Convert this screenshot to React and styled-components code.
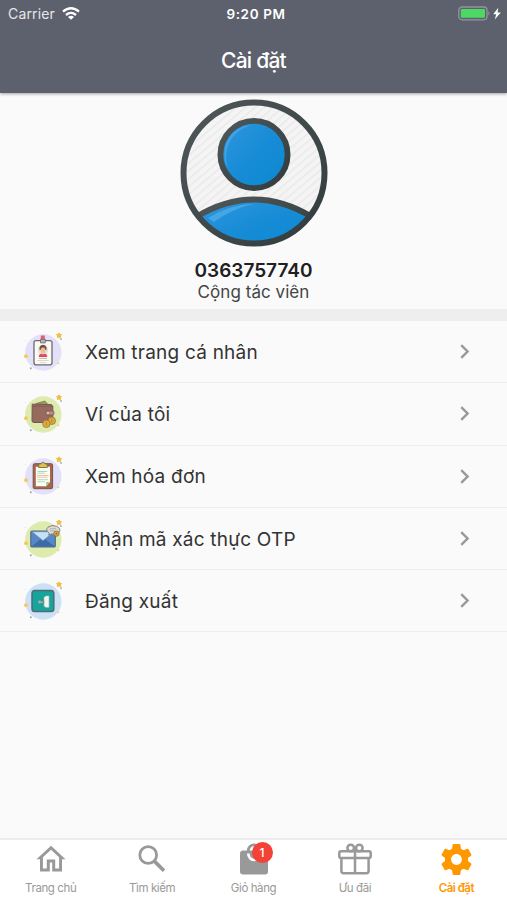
import React from "react";
import styled, { createGlobalStyle } from "styled-components";
import { MdChevronRight } from "react-icons/md";

const Avatar = () => (
  <svg width="148" height="148" viewBox="0 0 148 148">
    <defs>
      <linearGradient id="ring" x1="0" y1="0" x2="1" y2="1">
        <stop offset="0" stopColor="#505859" />
        <stop offset="1" stopColor="#313b3d" />
      </linearGradient>
      <linearGradient id="blue" x1="0" y1="0" x2="1" y2="1">
        <stop offset="0" stopColor="#2f98df" />
        <stop offset="0.5" stopColor="#188cd6" />
        <stop offset="1" stopColor="#0b88d2" />
      </linearGradient>
      <pattern
        id="stripes"
        width="6"
        height="6"
        patternUnits="userSpaceOnUse"
        patternTransform="rotate(50)"
      >
        <rect width="6" height="6" fill="#f4f4f4" />
        <rect width="1.3" height="6" fill="#e8e8e8" />
      </pattern>
      <clipPath id="inside">
        <circle cx="74" cy="74" r="70" />
      </clipPath>
    </defs>
    <circle cx="74" cy="74" r="70" fill="url(#stripes)" />
    <g clipPath="url(#inside)">
      <path
        d="M16 118Q74 83 132 118V150H16Z"
        fill="url(#blue)"
        stroke="url(#ring)"
        strokeWidth="5.8"
      />
      <path d="M28 119Q48 106 75 104.5Q51 110 34 123Z" fill="#46a5e4" />
    </g>
    <circle
      cx="74"
      cy="55.5"
      r="33.6"
      fill="url(#blue)"
      stroke="url(#ring)"
      strokeWidth="5.8"
    />
    <path
      d="M48 70C38 50 50 27 72 26C52 31 42 49 48 70Z"
      fill="#42a2e3"
    />
    <circle
      cx="74"
      cy="74"
      r="70.5"
      fill="none"
      stroke="url(#ring)"
      strokeWidth="6"
    />
  </svg>
);

// round backdrop with the small stars that every menu icon shares
const MenuArt = ({ bg, children }) => (
  <svg width="40" height="40" viewBox="0 0 40 40">
    <circle cx="20.3" cy="20.5" r="18.2" fill={bg} />
    <path
      d="M36 .9l.8 1.4 1.7.3-1.1 1.3.2 1.6-1.6-.6-1.6.6.2-1.6-1.1-1.3 1.7-.3z"
      fill="#f5c13d"
      stroke="#f1bd42"
      strokeWidth="1"
      strokeLinejoin="round"
    />
    <circle cx="3" cy="24.2" r="1.9" fill="#f5c857" />
    <circle cx="35.4" cy="31.2" r="1" fill="#eed070" />
    <circle cx="38" cy="7" r=".9" fill="#9fafa0" />
    <circle cx="7.8" cy="36.2" r="1" fill="#98a49e" />
    <circle cx="2.2" cy="8.5" r=".6" fill="#dfdff0" />
    {children}
  </svg>
);

const BadgeArt = () => (
  <MenuArt bg="#e3e0fa">
    <rect
      x="11"
      y="8.6"
      width="18"
      height="24.2"
      rx="2"
      fill="#fcfbf2"
      stroke="#6d6970"
      strokeWidth="1.3"
    />
    <path d="M17.8 3.5h4v5h-4z" fill="#e75b71" />
    <path d="M17.5 7.3h4.8v3.6h-4.8z" fill="#b6b7b8" stroke="#68656a" strokeWidth=".8" />
    <circle cx="20" cy="18" r="5.2" fill="#e4e1db" />
    <path d="M16.6 18q-.8-5 3.4-5.2 4.2.2 3.4 5.2z" fill="#765048" />
    <ellipse cx="20" cy="18.4" rx="2.4" ry="3" fill="#efbd98" />
    <path d="M15.7 25q.1-3.2 3-3.3l1.3.8 1.3-.8q2.9.1 3 3.3z" fill="#df4961" />
    <path d="M16 26.4h8" stroke="#c9b5b2" strokeWidth="1" />
    <path d="M14.3 28.5h11.4M17 30.6h6" stroke="#c7c7c2" strokeWidth=".7" />
  </MenuArt>
);

const WalletArt = () => (
  <MenuArt bg="#ddeab0">
    <path d="M13 9.5l9-2.4 3 3.4H12z" fill="#9ca34f" stroke="#756644" strokeWidth=".7" />
    <path
      d="M9.2 10.2l19 .3 1.6 1.5v15.5l-3 1H11q-2-.1-2-2z"
      fill="#966b5d"
      stroke="#75574f"
      strokeWidth="1"
    />
    <path d="M9.6 12.4h20.2" stroke="#805b50" strokeWidth=".8" />
    <path
      d="M30.5 17h-7q-1.9 1.9 0 4h7q1.4-2 0-4z"
      fill="#b28d7e"
      stroke="#795a50"
      strokeWidth=".7"
    />
    <circle cx="25" cy="19" r=".9" fill="#eed9ca" />
    <circle cx="28.8" cy="26.8" r="3.7" fill="#dfa936" stroke="#91733d" strokeWidth=".8" />
    <circle cx="23.4" cy="29.8" r="3.7" fill="#e2ad39" stroke="#91733d" strokeWidth=".8" />
    <path d="M28.8 25v3.4M23.4 28v3.4" stroke="#aa7d2a" strokeWidth=".9" />
  </MenuArt>
);

const BillArt = () => (
  <MenuArt bg="#e3e0fa">
    <rect
      x="10.2"
      y="7.7"
      width="19.4"
      height="25"
      rx="1.5"
      fill="#a9654c"
      stroke="#78534b"
      strokeWidth="1"
    />
    <path d="M12.8 10.7H27V26l-3.8 4.2H12.8z" fill="#fcfdf2" />
    <path d="M27 26h-3.8v4.2z" fill="#9fc58b" />
    <path d="M14.5 15.5h9.8M14.5 17.2h7.2" stroke="#88caa3" strokeWidth=".7" />
    <path d="M14 19.5h11.7M14 21.2h10.5" stroke="#e6a782" strokeWidth=".7" />
    <path d="M14.5 23.7h10.5M14.5 25.7h7.4" stroke="#89caa2" strokeWidth=".7" />
    <path
      d="M15.7 11.5V8.9q.3-1 2.6-1.1Q18.5 6.2 20 6.2t1.7 1.6q2.3.1 2.6 1.1v2.6z"
      fill="#dec44c"
      stroke="#746d4c"
      strokeWidth=".9"
    />
  </MenuArt>
);

const MailArt = () => (
  <MenuArt bg="#ddebad">
    <rect
      x="7.8"
      y="12"
      width="24.5"
      height="16"
      rx="1.3"
      fill="#5588c5"
      stroke="#52647e"
      strokeWidth="1.1"
    />
    <path d="M8.5 27.4L18 20.1l2 1.2 2-1.2 9.7 7.3z" fill="#3b6ca9" />
    <path d="M9 12.7h22L20 21.7z" fill="#c8e0f5" stroke="#6684a8" strokeWidth=".6" />
    <path
      d="M26.3 14.2q-4.5-3.2-1.3-6 3.4-2.8 8.7-.9 5.1 2.5 2 6.4-3.3 2.6-7 1.2l-3.2 1.2z"
      fill="#dcdbd7"
      stroke="#77787a"
      strokeWidth=".9"
    />
    <path d="M27 9.7h6M26.6 11.8h5" stroke="#a2a29d" strokeWidth=".7" />
    <circle cx="33.4" cy="14.6" r="2.7" fill="#d7a440" stroke="#887044" strokeWidth=".8" />
    <circle cx="33.4" cy="14.6" r=".8" fill="#80652d" />
  </MenuArt>
);

const LogoutArt = () => (
  <MenuArt bg="#cce1f6">
    <rect
      x="9"
      y="9.6"
      width="21.8"
      height="21"
      rx="2.8"
      fill="#14a69c"
      stroke="#526a70"
      strokeWidth="1.5"
    />
    <path
      d="M20.8 16.2l2.2-1.5h3.2v12H23l-2.2-1.5z"
      fill="#f3f6ee"
      stroke="#59958e"
      strokeWidth=".6"
    />
    <path d="M20.8 20h-3v-2L14 21.1l3.8 3v-1.9h3z" fill="#91bbb3" stroke="#3a7e79" strokeWidth=".6" />
  </MenuArt>
);

const HomeIcon = () => (
  <svg width="30" height="28" viewBox="0 0 30 28">
    <path
      d="M15 .8L29.5 14.2H26V26.5H16.2V17.5H13.8V26.5H4V14.2H.5ZM15 4.8L6.9 12.2V23.6H10.8V14.6H19.2V23.6H23.1V12.2Z"
      fill="currentColor"
      fillRule="evenodd"
    />
  </svg>
);

const SearchIcon = () => (
  <svg width="28" height="28" viewBox="0 0 28 28" fill="none" stroke="currentColor">
    <circle cx="10.2" cy="10" r="8.4" strokeWidth="2.8" />
    <path d="M16.6 16.4L26 25.8" strokeWidth="3.7" />
  </svg>
);

const BagIcon = () => (
  <svg width="28" height="32" viewBox="0 0 28 32">
    <rect y="7.5" width="28" height="24" rx="3" fill="currentColor" />
    <path d="M8.3 9V7.5a5.7 5.7 0 0 1 11.4 0V9" fill="none" stroke="currentColor" strokeWidth="2.8" />
    <path d="M8.3 10.5a5.7 6.5 0 0 0 11.4 0" fill="none" stroke="#fff" strokeWidth="2.7" />
  </svg>
);

const GiftIcon = () => (
  <svg
    width="34"
    height="32"
    viewBox="0 0 34 32"
    fill="none"
    stroke="currentColor"
    strokeWidth="2.5"
  >
    <rect x="1.3" y="8.2" width="31.4" height="6.8" rx="1.8" />
    <path d="M3.4 15v13q0 2.2 2.2 2.2h22.8q2.2 0 2.2-2.2V15M17 8v22" />
    <circle cx="12.7" cy="5" r="3.3" />
    <circle cx="21.3" cy="5" r="3.3" />
    <path d="M15.5 7h3" />
  </svg>
);

const GearIcon = () => (
  <svg width="37" height="37" viewBox="0 0 24 24" fill="currentColor">
    <path d="M19.43 12.98c.04-.32.07-.64.07-.98s-.03-.66-.07-.98l2.11-1.65c.19-.15.24-.42.12-.64l-2-3.46c-.12-.22-.39-.3-.61-.22l-2.49 1c-.52-.4-1.08-.73-1.69-.98l-.38-2.65C14.46 2.18 14.25 2 14 2h-4c-.25 0-.46.18-.49.42l-.38 2.65c-.61.25-1.17.59-1.69.98l-2.49-1c-.23-.09-.49 0-.61.22l-2 3.46c-.13.22-.07.49.12.64l2.11 1.65c-.04.32-.07.65-.07.98s.03.66.07.98l-2.11 1.65c-.19.15-.24.42-.12.64l2 3.46c.12.22.39.3.61.22l2.49-1c.52.4 1.08.73 1.69.98l.38 2.65c.03.24.24.42.49.42h4c.25 0 .46-.18.49-.42l.38-2.65c.61-.25 1.17-.59 1.69-.98l2.49 1c.23.09.49 0 .61-.22l2-3.46c.12-.22.07-.49-.12-.64l-2.11-1.65zM12 15.5c-1.93 0-3.5-1.57-3.5-3.5s1.57-3.5 3.5-3.5 3.5 1.57 3.5 3.5-1.57 3.5-3.5 3.5z" />
  </svg>
);

const menu = [
  { label: "Xem trang cá nhân", art: <BadgeArt /> },
  { label: "Ví của tôi", art: <WalletArt /> },
  { label: "Xem hóa đơn", art: <BillArt /> },
  { label: "Nhận mã xác thực OTP", art: <MailArt /> },
  { label: "Đăng xuất", art: <LogoutArt /> },
];

const tabs = [
  { label: "Trang chủ", icon: <HomeIcon /> },
  { label: "Tìm kiếm", icon: <SearchIcon /> },
  { label: "Giỏ hàng", icon: <BagIcon />, count: 1 },
  { label: "Ưu đãi", icon: <GiftIcon /> },
  { label: "Cài đặt", icon: <GearIcon />, active: true },
];

function App() {
  return (
    <Screen>
      <GlobalStyle />
      <Header>
        <StatusBar>
          <Carrier>
            Carrier
            <svg width="18" height="13" viewBox="0 0 18 13" fill="none" stroke="#fff" strokeWidth="2.3">
              <path d="M1 4.7Q9-2.2 17 4.7M4 8Q9 3.8 14 8" />
              <path d="M6 9.9Q9 7.6 12 9.9L9 12.8Z" fill="#fff" stroke="none" />
            </svg>
          </Carrier>
          <Clock>9:20 PM</Clock>
          <Power>
            <svg width="44" height="16" viewBox="0 0 44 16">
              <rect x=".8" y="1" width="28.2" height="12.8" rx="3.2" fill="none" stroke="#92959d" strokeWidth="1.3" />
              <rect x="2.8" y="3" width="24.2" height="8.8" rx="1.3" fill="#4bd964" />
              <path d="M30.4 5.2q2.3 2.2 0 4.4z" fill="#92959d" />
              <path d="M40.3 1.8l-5.1 6.5h3l-1.4 5.2 6-7h-3.2z" fill="#fff" />
            </svg>
          </Power>
        </StatusBar>
        <Title>Cài đặt</Title>
      </Header>

      <Profile>
        <Avatar />
        <Phone>0363757740</Phone>
        <Role>Cộng tác viên</Role>
      </Profile>

      <Menu>
        {menu.map((item) => (
          <MenuRow key={item.label}>
            {item.art}
            <MenuLabel>{item.label}</MenuLabel>
            <MdChevronRight size={29} />
          </MenuRow>
        ))}
      </Menu>

      <TabBar>
        {tabs.map((tab) => (
          <Tab key={tab.label} $active={tab.active}>
            <TabIcon>
              {tab.icon}
              {tab.count && <Count>{tab.count}</Count>}
            </TabIcon>
            <TabLabel $active={tab.active}>{tab.label}</TabLabel>
          </Tab>
        ))}
      </TabBar>
    </Screen>
  );
}

export default App;

const GlobalStyle = createGlobalStyle`
  * {
    box-sizing: border-box;
  }
  body {
    margin: 0;
    font-family: Inter, "Liberation Sans", sans-serif;
  }
  svg {
    display: block;
    flex-shrink: 0;
  }
`;

const Screen = styled.div`
  display: flex;
  flex-direction: column;
  height: 100vh;
  overflow: hidden;
  background-color: #fafafa;
  color: #333;
`;

const Header = styled.header`
  flex: 0 0 93px;
  background-color: #5d616d;
  color: #fff;
  box-shadow: 0 1px 3px rgba(0, 0, 0, 0.35);
`;

const StatusBar = styled.div`
  display: grid;
  grid-template-columns: 1fr auto 1fr;
  align-items: center;
  height: 27px;
  padding: 0 5px 0 8px;
`;

const Carrier = styled.div`
  display: flex;
  align-items: center;
  gap: 7px;
  font-size: 14px;
  letter-spacing: 0.15px;
  color: #e6e7ea;
`;

const Clock = styled.div`
  padding-left: 2px;
  font-size: 13.5px;
  font-weight: 600;
  letter-spacing: 0.6px;
`;

const Power = styled.div`
  display: flex;
  justify-content: flex-end;
`;

const Title = styled.h1`
  margin: 0;
  height: 66px;
  line-height: 68px;
  text-align: center;
  font-size: 21px;
  font-weight: 500;
  letter-spacing: -0.75px;
`;

const Profile = styled.section`
  display: flex;
  flex-direction: column;
  align-items: center;
  height: 228px;
  flex-shrink: 0;
  padding-top: 6px;
  border-bottom: 12px solid #eee;
`;

const Phone = styled.div`
  margin-top: 12px;
  line-height: 23px;
  font-size: 19px;
  font-weight: 600;
  color: #202020;
`;

const Role = styled.div`
  line-height: 21px;
  font-size: 17px;
  letter-spacing: 0.05px;
  color: #444;
`;

const Menu = styled.main`
  flex: 1;
`;

const MenuRow = styled.div`
  display: flex;
  align-items: center;
  height: 62.3px;
  padding: 0 28px 0 23px;
  border-bottom: 1px solid #eee;
  color: #999;
`;

const MenuLabel = styled.span`
  flex: 1;
  margin-left: 22px;
  padding-top: 1px;
  font-size: 19px;
  letter-spacing: 0.22px;
  color: #333;
`;

const TabBar = styled.nav`
  display: flex;
  flex: 0 0 62px;
  border-top: 2px solid #ececec;
  background-color: #fff;
`;

const Tab = styled.div`
  flex: 1;
  display: flex;
  flex-direction: column;
  align-items: center;
  color: ${(props) => (props.$active ? "#ff9800" : "#999")};
`;

const TabIcon = styled.div`
  position: relative;
  display: flex;
  align-items: center;
  justify-content: center;
  height: 38px;
`;

const Count = styled.span`
  position: absolute;
  top: 2px;
  left: 12px;
  width: 21px;
  height: 21px;
  border-radius: 50%;
  background-color: #f44336;
  color: #fff;
  font-size: 12px;
  font-weight: 500;
  line-height: 21px;
  text-align: center;
`;

const TabLabel = styled.span`
  line-height: 21px;
  font-size: 11.5px;
  font-weight: ${(props) => (props.$active ? 600 : 400)};
  letter-spacing: ${(props) => (props.$active ? "-0.5px" : "-0.4px")};
`;
